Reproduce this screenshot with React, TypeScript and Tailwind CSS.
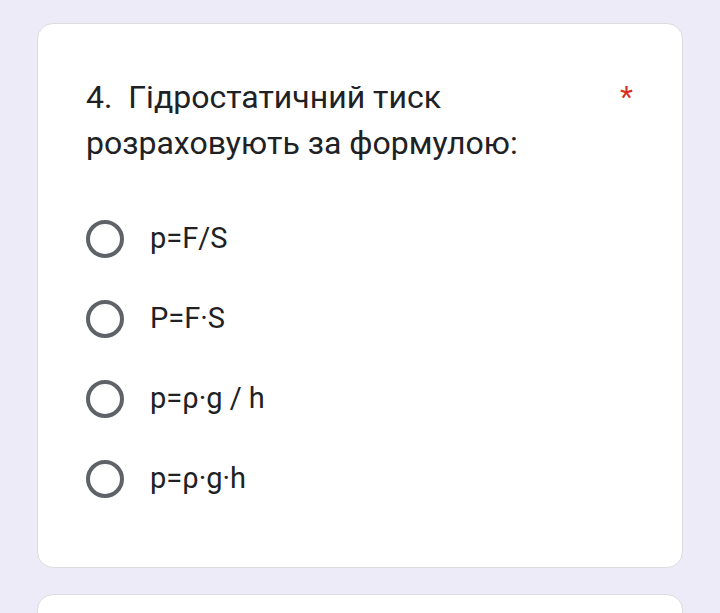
const options = ["p=F/S", "P=F·S", "p=ρ·g / h", "p=ρ·g·h"];

const Radio = () => (
  <span className="block w-[38px] h-[38px] rounded-full border-[4px] border-[#5f6368] shrink-0" />
);

export default function App() {
  return (
    <div
      className="min-h-[613px] h-[613px] overflow-hidden bg-[#eeebf8] pl-[37px] pr-[37px] pt-[23px] flex flex-col gap-[26px]"
      style={{ fontFamily: "Roboto, 'Noto Sans', sans-serif" }}
    >
      <div className="bg-white border border-[#dadce0] rounded-[16px] h-[545px] shrink-0 pl-[48px] pr-[49px] pt-[50px]">
        <div className="flex items-start justify-between">
          <h2 className="text-[32px] leading-[46px] text-[#202124] font-normal">
            4.&nbsp; Гідростатичний тиск
            <br />
            розраховують за формулою:
          </h2>
          <span className="text-[30px] leading-[46px] text-[#d93025]">*</span>
        </div>
        <div className="mt-[33px] flex flex-col">
          {options.map((o) => (
            <div key={o} className="h-[80px] flex items-center gap-[26px]">
              <Radio />
              <span className="text-[29px] text-[#202124]">{o}</span>
            </div>
          ))}
        </div>
      </div>
      <div className="bg-white border border-[#dadce0] rounded-[16px] h-[200px] shrink-0" />
    </div>
  );
}
